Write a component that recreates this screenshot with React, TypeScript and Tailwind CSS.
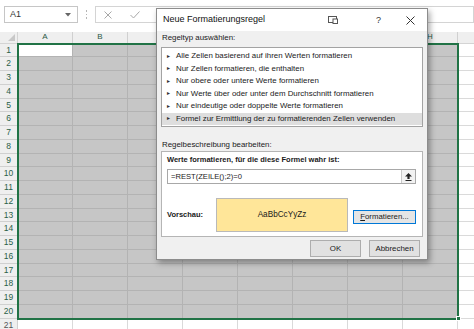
import React from 'react';

const cols = ['A', 'B', 'C', 'D', 'E', 'F', 'G', 'H'];
const shown: Record<string, boolean> = { A: true, B: true, H: true };
const items = [
  'Alle Zellen basierend auf ihren Werten formatieren',
  'Nur Zellen formatieren, die enthalten',
  'Nur obere oder untere Werte formatieren',
  'Nur Werte über oder unter dem Durchschnitt formatieren',
  'Nur eindeutige oder doppelte Werte formatieren',
  'Formel zur Ermittlung der zu formatierenden Zellen verwenden',
];

function Grid() {
  const rows = Array.from({ length: 21 }, (_, i) => i + 1);
  return (
    <div className="grid grid-cols-[18px_repeat(8,55px)_1fr] grid-rows-[11.5px_repeat(21,13.75px)]">
      <div className="bg-[#efefef] border-r border-b border-r-[#d4d4d4] border-b-[#d4d4d4] relative">
        <svg className="absolute right-[2px] bottom-[2px]" width="7" height="7" viewBox="0 0 7 7"><path d="M7 0 L7 7 L0 7 Z" fill="#c8c8c8" /></svg>
      </div>
      {cols.map((c) => (
        <div key={c} className="bg-[#efefef] border-r border-b border-r-[#d0d0d0] border-b-[#217346] text-[8px] leading-none text-[#2d5a45] flex items-center justify-center">
          {shown[c] ? c : null}
        </div>
      ))}
      <div className="bg-[#efefef] border-b border-b-[#d4d4d4]" />
      {rows.map((r) => {
        const sel = r <= 20;
        return (
          <React.Fragment key={r}>
            <div
              className={
                sel
                  ? 'bg-[#efefef] border-r border-b border-r-[#217346] border-b-[#d0d0d0] text-[8.5px] leading-none text-[#2a6148] flex items-center justify-center'
                  : 'bg-[#efefef] border-r border-b border-r-[#d0d0d0] border-b-[#d0d0d0] text-[8.5px] leading-none text-[#555] flex items-center justify-center'
              }
            >
              {r}
            </div>
            {cols.map((c) => {
              let cls = 'border-r border-b border-r-[#dadada] border-b-[#dadada] bg-white';
              if (sel) cls = 'border-r border-b border-r-[#b3b3b3] border-b-[#b3b3b3] bg-[#c6c6c6]';
              if (sel && r === 1 && c === 'A') cls = 'border-r border-b border-r-[#b3b3b3] border-b-[#b3b3b3] bg-white';
              return <div key={c} className={cls} />;
            })}
            <div className="border-b border-b-[#dadada] bg-white" />
          </React.Fragment>
        );
      })}
    </div>
  );
}

function FormulaBar() {
  return (
    <div className="h-[32px] flex items-start pt-[6px] pl-[4px]">
      <div className="w-[74px] h-[17px] border border-[#c6c6c6] flex items-center justify-between pl-[5px] pr-[6px]">
        <span className="text-[9px] text-[#333]">A1</span>
        <svg width="6" height="4" viewBox="0 0 6 4"><path d="M0 0 L6 0 L3 3.5 Z" fill="#666" /></svg>
      </div>
      <div className="w-[17px] h-[17px] flex flex-col items-center justify-center gap-[2px]">
        <div className="w-[1.5px] h-[1.5px] bg-[#b5b5b5]" />
        <div className="w-[1.5px] h-[1.5px] bg-[#b5b5b5]" />
        <div className="w-[1.5px] h-[1.5px] bg-[#b5b5b5]" />
      </div>
      <div className="h-[17px] flex-1 border border-[#d4d4d4] flex items-center">
        <svg className="ml-[8px]" width="8" height="8" viewBox="0 0 8 8"><path d="M0.5 0.5 L7.5 7.5 M7.5 0.5 L0.5 7.5" stroke="#a8a8a8" strokeWidth="1" /></svg>
        <svg className="ml-[18px]" width="10" height="8" viewBox="0 0 10 8"><path d="M0.5 4 L3.5 7 L9.5 0.5" stroke="#a8a8a8" strokeWidth="1" fill="none" /></svg>
      </div>
    </div>
  );
}

function Dialog() {
  return (
    <div className="absolute left-[156px] top-[8px] w-[272px] h-[252px] bg-[#f0f0f0] border border-[#8c8c8c] shadow-[2px_3px_6px_rgba(0,0,0,0.35)] flex flex-col text-[#1a1a1a]">
      <div className="h-[22px] bg-white flex items-center pl-[6px]">
        <span className="text-[9px] text-[#111] w-[165px] shrink-0">Neue Formatierungsregel</span>
        <div className="w-[10px] h-[9px] shrink-0 flex items-center">
          <svg width="10" height="8" viewBox="0 0 10 8">
            <rect x="0.5" y="0.5" width="8" height="6" fill="none" stroke="#555" strokeWidth="1" />
            <rect x="5" y="3" width="4.5" height="4.5" fill="#fff" stroke="#555" strokeWidth="1" />
          </svg>
        </div>
        <div className="w-[38px] shrink-0" />
        <div className="w-[6px] shrink-0 text-[9px] text-[#333] leading-none">?</div>
        <div className="w-[24px] shrink-0" />
        <div className="w-[9px] shrink-0 flex items-center">
          <svg width="9" height="9" viewBox="0 0 9 9"><path d="M0.5 0.5 L8.5 8.5 M8.5 0.5 L0.5 8.5" stroke="#333" strokeWidth="1" /></svg>
        </div>
      </div>
      <div className="flex flex-col px-[4px]">
        <div className="mt-[2px] h-[10px] leading-[10px] text-[7.9px] pl-[1px]">Regeltyp auswählen:</div>
        <div className="mt-[4px] h-[80px] bg-white border border-[#a3a3a3] pt-[2px] flex flex-col">
          {items.map((t, i) => (
            <div
              key={i}
              className={
                i === 5
                  ? 'h-[12.5px] flex items-center text-[7.9px] bg-[#dedede] pl-[4px]'
                  : 'h-[12.5px] flex items-center text-[7.9px] pl-[4px]'
              }
            >
              <span className="text-[5px] mr-[5px] text-[#333]">►</span>
              <span>{t}</span>
            </div>
          ))}
        </div>
        <div className="mt-[13px] h-[10px] leading-[10px] text-[7.9px] pl-[1px]">Regelbeschreibung bearbeiten:</div>
        <div className="mt-[1px] h-[86px] bg-white border border-[#b5b5b5] flex flex-col px-[5px]">
          <div className="mt-[3px] h-[10px] leading-[10px] text-[7.5px] font-bold">Werte formatieren, für die diese Formel wahr ist:</div>
          <div className="mt-[4px] h-[15px] mr-[1px] border border-[#a8a8a8] flex items-center">
            <span className="pl-[3px] text-[7.6px] flex-1">=REST(ZEILE();2)=0</span>
            <div className="w-[14px] h-[13px] bg-[#f2f2f2] border-l border-[#c8c8c8] flex items-center justify-center">
              <svg width="7" height="8" viewBox="0 0 7 8">
                <path d="M3.5 0 L7 3.5 L4.6 3.5 L4.6 6 L2.4 6 L2.4 3.5 L0 3.5 Z" fill="#222" />
                <rect x="0.5" y="7" width="6" height="1" fill="#222" />
              </svg>
            </div>
          </div>
          <div className="flex items-center mt-[14px]">
            <span className="w-[49px] text-[7.5px] font-bold">Vorschau:</span>
            <div className="w-[132px] h-[34px] bg-[#ffe699] border border-[#b9b9b9] flex items-center justify-center text-[8.2px]">AaBbCcYyZz</div>
            <div className="ml-[5px] w-[63px] h-[14px] bg-[#e5e5e5] border border-[#0078d7] flex items-center justify-center text-[7.8px] mt-[4px]">
              <span><span className="underline">F</span>ormatieren...</span>
            </div>
          </div>
        </div>
        <div className="mt-[3px] flex justify-end gap-[8px] pr-[3px]">
          <div className="w-[51px] h-[17px] bg-[#e1e1e1] border border-[#adadad] flex items-center justify-center text-[7.9px]">OK</div>
          <div className="w-[51px] h-[17px] bg-[#e1e1e1] border border-[#adadad] flex items-center justify-center text-[7.9px]">Abbrechen</div>
        </div>
      </div>
    </div>
  );
}

export default function App() {
  return (
    <div className="relative w-[474px] h-[329px] overflow-hidden bg-white font-['Liberation_Sans',Arial,sans-serif]">
      <FormulaBar />
      <Grid />
      <div className="absolute left-[17px] top-[42.5px] w-[442px] h-[277px] border-2 border-[#217346] pointer-events-none" />
      <div className="absolute left-[456px] top-[316px] w-[5px] h-[5px] bg-[#217346] border border-white" />
      <Dialog />
    </div>
  );
}
